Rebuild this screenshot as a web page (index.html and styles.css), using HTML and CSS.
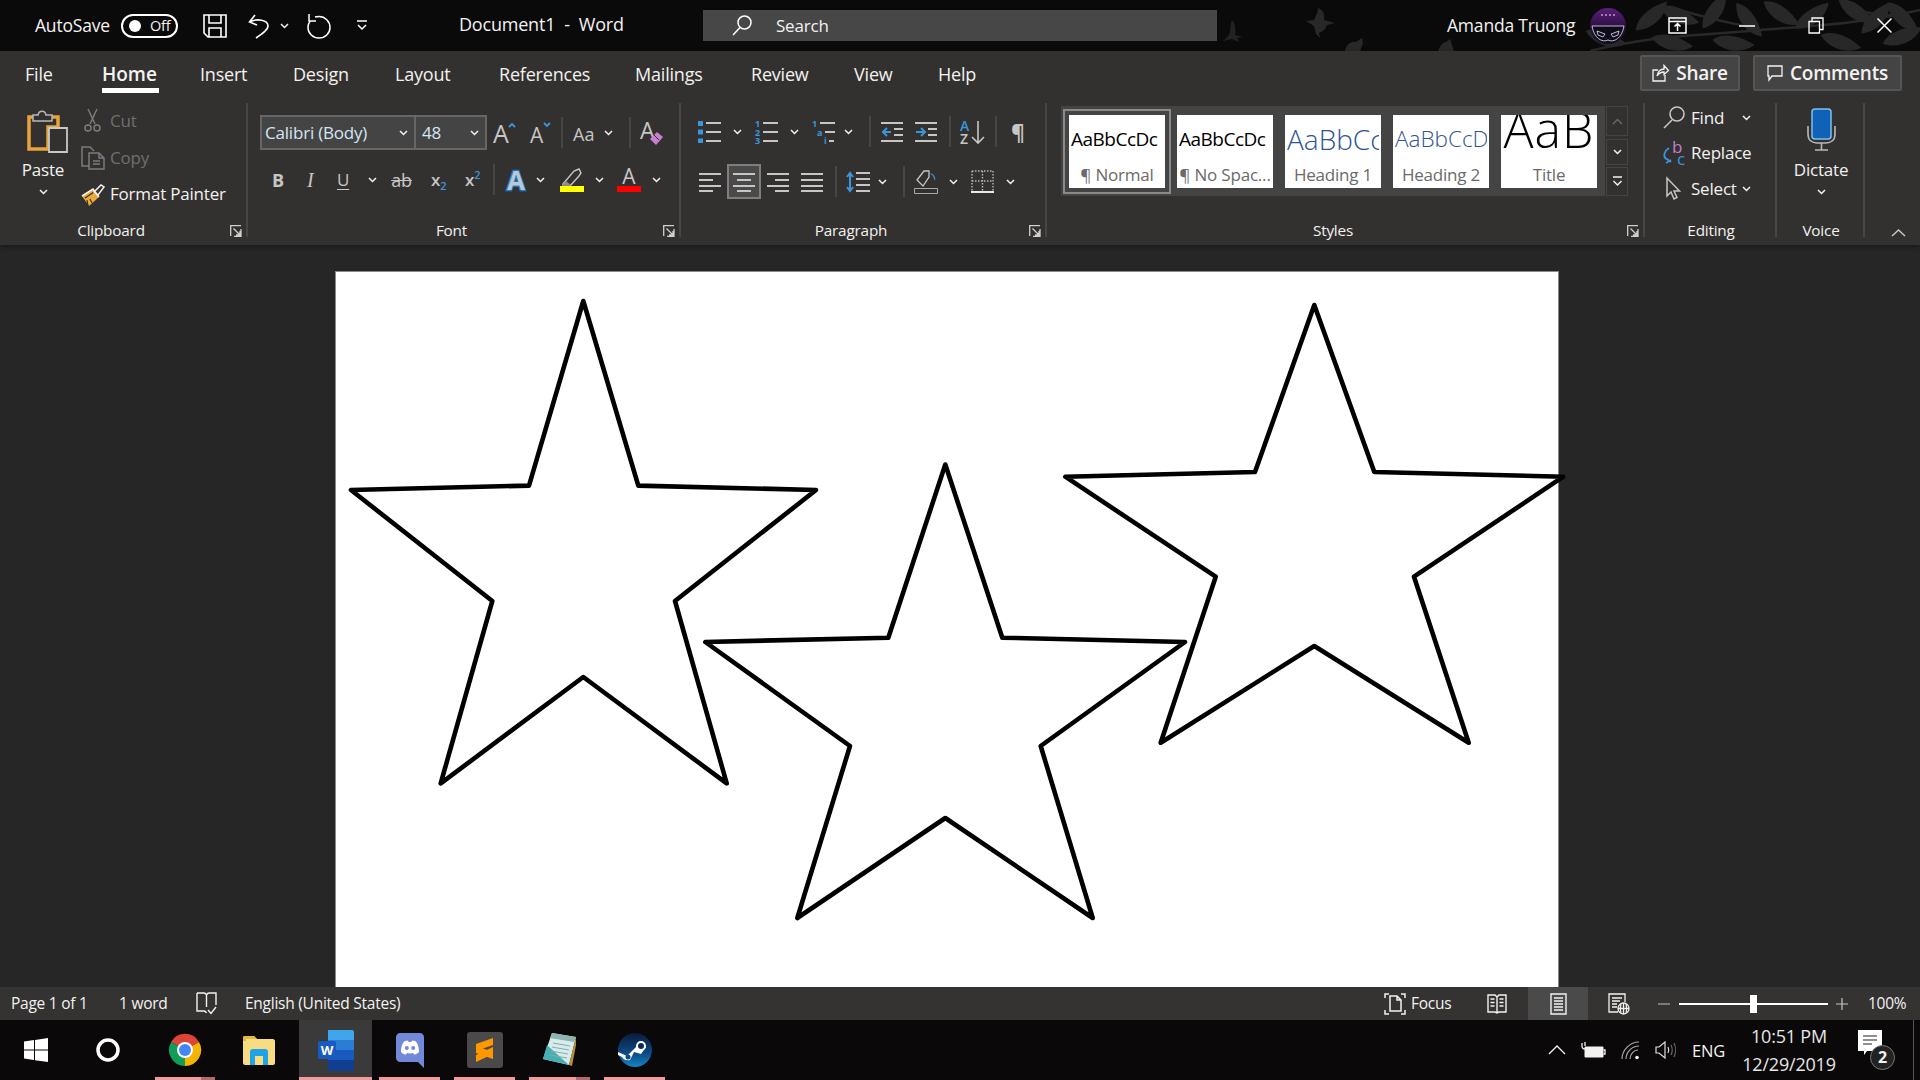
FILE: index.html
```html
<!DOCTYPE html>
<html lang="en">
<head>
<meta charset="utf-8">
<title>Document1 - Word</title>
<link rel="stylesheet" href="styles.css">
</head>
<body>
<svg class="defs" width="0" height="0">
  <symbol id="c" viewBox="0 0 9 6"><path d="M1 1L4.5 4.5L8 1" fill="none" stroke="#f3f2f1" stroke-width="1.5"/></symbol>
  <symbol id="launch" viewBox="0 0 12 12"><path d="M.7 11V.7H11M4 1v0M11 4v7.3H4M3.5 3.5L10 10M10 6v4H6" fill="none" stroke="#d0d0d0" stroke-width="1.3"/></symbol>
  <symbol id="leaf" viewBox="0 0 30 14" overflow="visible"><path d="M0 7C6 0 18-1 30 3C24 11 10 14 0 7Z" fill="#282828"/></symbol>
</svg>

<header class="titlebar">
  <svg class="deco" width="720" height="51" viewBox="1200 0 720 51">
    <path d="M1232 20c3 2 4 10 3 15l8 2-6 1 2 4-7-3-9 2c3-3 6-5 7-9 0-5 1-9 2-12z" fill="#222"/>
    <path d="M1318 8c5 2 7 6 6 12l11 3-8 2c-2 5-5 7-8 8l1 5-4-4-2-8-8-5 8-1c2-4 4-8 4-12zM1345 51c1-6 6-10 11-9l6-4 1 5-3 8zM1438 51c2-5 5-9 8-9l4-3 4 12z" fill="#282828"/>
    <path d="M1590 51C1660 34 1700 36 1760 30C1810 26 1860 24 1920 10M1680 10C1720 22 1740 24 1760 30M1840 0C1850 10 1880 18 1900 14" fill="none" stroke="#282828" stroke-width="2.5"/>
    <use href="#leaf" width="42" height="20" transform="translate(1630 22) rotate(-35)"/>
    <use href="#leaf" width="42" height="20" transform="translate(1590 22) rotate(25)"/>
    <use href="#leaf" width="42" height="20" transform="translate(1655 28) rotate(20)"/>
    <use href="#leaf" width="42" height="20" transform="translate(1665 -2) rotate(30)"/>
    <use href="#leaf" width="42" height="20" transform="translate(1695 22) rotate(-50)"/>
    <use href="#leaf" width="42" height="20" transform="translate(1715 30) rotate(15)"/>
    <use href="#leaf" width="42" height="20" transform="translate(1745 -2) rotate(60)"/>
    <use href="#leaf" width="42" height="20" transform="translate(1770 -6) rotate(40)"/>
    <use href="#leaf" width="42" height="20" transform="translate(1790 20) rotate(-30)"/>
    <use href="#leaf" width="42" height="20" transform="translate(1825 26) rotate(25)"/>
    <use href="#leaf" width="42" height="20" transform="translate(1855 26) rotate(-40)"/>
    <use href="#leaf" width="42" height="20" transform="translate(1880 34) rotate(-15)"/>
    <use href="#leaf" width="42" height="20" transform="translate(1845 -8) rotate(40)"/>
    <use href="#leaf" width="42" height="20" transform="translate(1895 -4) rotate(50)"/>
  </svg>
  <span class="autosave">AutoSave</span>
  <span class="toggle"><i class="toggle-dot"></i><span class="toggle-text">Off</span></span>
  <svg class="m25" width="24" height="24" viewBox="0 0 24 24" fill="none" stroke="#fff" stroke-width="1.6"><path d="M1 1H23V23H5L1 19ZM6 1V9H18V1M6 23V14H18V23"/></svg>
  <svg class="m21" width="22" height="24" viewBox="0 0 22 24" fill="none" stroke="#fff" stroke-width="1.6"><path d="M7 1L1.500 8L9 11M1.500 8C9 4 20 6 20 12C20 16 14 20 8 24"/></svg>
  <svg class="chev m10" width="9" height="6"><use href="#c"/></svg>
  <svg class="m18" width="24" height="26" viewBox="0 0 24 26" fill="none" stroke="#fff" stroke-width="1.5"><path d="M2 1V8H9M8 4C9 3.600 11 3.500 12 3.500C18 3.500 23 8.500 23 14.500C23 20.500 18 25 12 25C6 25 1 20.500 1 14.500C1 12 1.500 10 3 8.500"/></svg>
  <svg class="m25" width="12" height="11" viewBox="0 0 12 11" fill="none" stroke="#fff" stroke-width="1.5"><path d="M1 1H11M2 5L6 9L10 5"/></svg>
  <span class="doc-title">Document1&nbsp; -&nbsp; Word</span>
  <div class="search">
    <svg width="20" height="21" viewBox="0 0 20 21" fill="none" stroke="#fff" stroke-width="1.5"><circle cx="12.500" cy="7.500" r="6.500"/><path d="M8 12.500L1 20"/></svg>
    <span class="search-text">Search</span>
  </div>
  <div class="user">
    <span class="user-name">Amanda Truong</span>
    <svg width="36" height="42" viewBox="0 0 36 42">
      <defs><linearGradient id="av" x1="0" y1="0" x2="0" y2="1"><stop offset="0" stop-color="#5a1e7c"/><stop offset=".55" stop-color="#2a0f3d"/><stop offset="1" stop-color="#120a22"/></linearGradient></defs>
      <circle cx="18" cy="21" r="18" fill="url(#av)"/>
      <path d="M2 21H34C32 33 24 38 18 35C12 38 4 33 2 21ZM7 26L15 29L13 32L8 30ZM29 26L21 29L23 32L28 30Z" fill="#0b0b1a" stroke="#e8e4f0" stroke-width=".8"/>
      <path d="M11 10H25" stroke="#e8e4f0" stroke-dasharray="2 2"/>
    </svg>
    <svg class="m42" width="19" height="17" viewBox="0 0 19 17" fill="none" stroke="#fff" stroke-width="1.500"><path d="M1 1H18V16H1ZM1 4.500H18M9.500 14V7M6.500 9.500L9.500 6.500L12.500 9.500"/></svg>
    <svg class="m52" width="16" height="2" viewBox="0 0 16 2"><path d="M0 1H16" stroke="#fff" stroke-width="1.500"/></svg>
    <svg class="m53" width="16" height="17" viewBox="0 0 16 17" fill="none" stroke="#fff" stroke-width="1.300"><path d="M1 4.500H11.500V16H1ZM4 4.500V1H15V12.500H11.500"/></svg>
    <svg class="m53" width="15" height="15" viewBox="0 0 15 15" fill="none" stroke="#fff" stroke-width="1.500"><path d="M.5 .5L14.500 14.500M14.500 .5L.5 14.500"/></svg>
  </div>
</header>

<section class="ribbon">
  <div class="tabrow">
    <nav class="tabs">
      <span>File</span><span class="tab-active">Home</span><span>Insert</span><span>Design</span><span>Layout</span><span>References</span><span>Mailings</span><span>Review</span><span>View</span><span>Help</span>
    </nav>
    <div class="actions">
      <button class="act act-share"><svg width="17" height="18" viewBox="0 0 17 18" fill="none" stroke="#f3f2f1" stroke-width="1.300"><path d="M6 6H1V17H13V11M5 12C6 7 9 5 12 5V1.500L16.500 6.500L12 10.500V8C9 8 7 9 5 12Z"/></svg><span>Share</span></button>
      <button class="act act-comments"><svg width="16" height="17" viewBox="0 0 16 17" fill="none" stroke="#f3f2f1" stroke-width="1.300"><path d="M1 1H15V11H5L2 15V11H1Z"/></svg><span>Comments</span></button>
    </div>
  </div>
  <div class="groups">
    <div class="group g-clip">
      <div class="clip">
        <div class="paste">
          <svg class="paste-ico" width="41" height="43" viewBox="0 0 41 43">
            <path d="M2 7H31V17H21V39H2Z" fill="none" stroke="#e8a33a" stroke-width="3.500"/>
            <path d="M6 11V5H11C12 0 18 0 19 5H25V11Z" fill="#323130" stroke="#b8b8b8" stroke-width="1.500"/>
            <path d="M22 18H40V42H22Z" fill="#323130" stroke="#c8c8c8" stroke-width="1.800"/>
          </svg>
          <span class="paste-text">Paste</span>
          <svg class="chev m9" width="9" height="6"><use href="#c"/></svg>
        </div>
        <div class="cmds">
          <div class="cmd dim">
            <svg width="24" height="24" viewBox="0 0 24 24" fill="none" stroke="#7b7b7b" stroke-width="1.500"><path d="M7 0L14 15M16 0L9 15"/><circle cx="7" cy="19" r="3"/><circle cx="16" cy="19" r="3"/></svg>
            <span>Cut</span>
          </div>
          <div class="cmd dim">
            <svg width="24" height="24" viewBox="0 0 24 24" fill="none" stroke="#7b7b7b" stroke-width="1.500"><path d="M8 20H1V1H9L13 5M8 7H18L23 12V23H8ZM18 7V12H23M12 15H19M12 18H19"/></svg>
            <span>Copy</span>
          </div>
          <div class="cmd">
            <svg width="24" height="24" viewBox="0 0 24 24"><path d="M1 13L12 6L18 14L8 23Z" fill="#eda936"/><path d="M4 15L13 9M7 23L6 17M11 20L9 16" stroke="#323130" stroke-width="1.200"/><path d="M13 9L20 2L23 4L17 12Z" fill="#323130" stroke="#f3f2f1" stroke-width="1.500"/><path d="M1 13L12 6L18 14" fill="none" stroke="#f3f2f1" stroke-width="1.500"/></svg>
            <span class="cmd-white">Format Painter</span>
          </div>
        </div>
      </div>
      <span class="glabel">Clipboard</span>
      <svg class="launcher" width="12" height="12"><use href="#launch"/></svg>
    </div>

    <div class="group g-font">
      <div class="row r1">
        <div class="box box-font"><span>Calibri (Body)</span><svg class="chev" width="9" height="6"><use href="#c"/></svg></div>
        <div class="box box-size"><span>48</span><svg class="chev" width="9" height="6"><use href="#c"/></svg></div>
        <svg class="m6" width="24" height="24" viewBox="0 0 24 24"><text class="g-a" x="0" y="22" font-size="25">A</text><path d="M16 6L19 3L22 6" fill="none" stroke="#3a96dd" stroke-width="1.800"/></svg>
        <svg class="m13" width="20" height="24" viewBox="0 0 20 24"><text class="g-a" x="0" y="22" font-size="21">A</text><path d="M14 2L17 5L20 2" fill="none" stroke="#3a96dd" stroke-width="1.800"/></svg>
        <i class="sep m11"></i>
        <svg class="m10" width="24" height="20" viewBox="0 0 24 20"><text class="g-a" x="0" y="18" font-size="18">Aa</text></svg>
        <svg class="chev m7" width="9" height="6"><use href="#c"/></svg>
        <i class="sep m16"></i>
        <svg class="m9" width="23" height="26" viewBox="0 0 23 26"><text class="g-a" x="0" y="19" font-size="23">A</text><path d="M10 19L17 12L23 17L16 25Z" fill="#c77fd0"/><path d="M14 15L19 20" stroke="#323130"/></svg>
      </div>
      <div class="row r2">
        <span class="t-b m12">B</span>
        <span class="t-i m24">I</span>
        <span class="t-u m22">U</span>
        <svg class="chev m17" width="9" height="6"><use href="#c"/></svg>
        <span class="t-s m13">ab</span>
        <span class="t-x m18">x<sub>2</sub></span>
        <span class="t-x m18">x<sup>2</sup></span>
        <i class="sep m12"></i>
        <svg class="m10" width="22" height="24" viewBox="0 0 22 24"><text class="g-fx" x="11" y="22" font-size="26" text-anchor="middle">A</text></svg>
        <svg class="chev m9" width="9" height="6"><use href="#c"/></svg>
        <svg class="m15" width="24" height="24" viewBox="0 0 24 24"><path d="M3 16L14 3L19 1L21 5L19 8L9 19H3Z" fill="none" stroke="#c8c6c4" stroke-width="1.400"/><path d="M3 16L6 13L11 17L9 19H3Z" fill="#8a8a8a"/><path d="M0 18H24V24H0Z" fill="#ff0"/></svg>
        <svg class="chev m11" width="9" height="6"><use href="#c"/></svg>
        <svg class="m13" width="24" height="24" viewBox="0 0 24 24"><text class="g-a" x="12" y="16" font-size="21" text-anchor="middle">A</text><path d="M0 18H24V24H0Z" fill="#f00"/></svg>
        <svg class="chev m11" width="9" height="6"><use href="#c"/></svg>
      </div>
      <span class="glabel">Font</span>
      <svg class="launcher" width="12" height="12"><use href="#launch"/></svg>
    </div>

    <div class="group g-para">
      <div class="row r1p">
        <svg width="23" height="22" viewBox="0 0 23 22"><path d="M8 2H23M8 11H23M8 20H23" stroke="#c8c6c4" stroke-width="1.800"/><path d="M0 0H5V5H0ZM0 8.500H5V13.500H0ZM0 17.500H5V22H0Z" fill="#3a96dd"/></svg>
        <svg class="chev m12" width="9" height="6"><use href="#c"/></svg>
        <svg class="m13" width="23" height="24" viewBox="0 0 23 24"><path d="M8 3H23M8 12H23M8 21H23" stroke="#c8c6c4" stroke-width="1.800"/><text class="g-n" x="0" y="7">1</text><text class="g-n" x="0" y="16">2</text><text class="g-n" x="0" y="24">3</text></svg>
        <svg class="chev m12" width="9" height="6"><use href="#c"/></svg>
        <svg class="m13" width="23" height="24" viewBox="0 0 23 24"><path d="M8 3H23M13 12H23M17 21H22" stroke="#c8c6c4" stroke-width="1.800"/><text class="g-n" x="0" y="7">1</text><text class="g-n" x="5" y="16">a</text><text class="g-n" x="12" y="24">i</text></svg>
        <svg class="chev m9" width="9" height="6"><use href="#c"/></svg>
        <i class="sep m16"></i>
        <svg class="m10" width="22" height="22" viewBox="0 0 22 22"><path d="M0 2H22M13 8H22M13 14H22M0 20H22" stroke="#c8c6c4" stroke-width="1.800"/><path d="M10 11H2M6 7L2 11L6 15" fill="none" stroke="#3a96dd" stroke-width="2"/></svg>
        <svg class="m12" width="22" height="22" viewBox="0 0 22 22"><path d="M0 2H22M13 8H22M13 14H22M0 20H22" stroke="#c8c6c4" stroke-width="1.800"/><path d="M1 11H10M6 7L10 11L6 15" fill="none" stroke="#3a96dd" stroke-width="2"/></svg>
        <i class="sep m12"></i>
        <svg class="m9" width="24" height="24" viewBox="0 0 24 24"><text class="g-az" x="0" y="11" fill="#3a96dd">A</text><text class="g-az" x="0" y="24" fill="#c8c6c4">Z</text><path d="M18 1V23M12 17L18 23L24 17" fill="none" stroke="#c8c6c4" stroke-width="1.600"/></svg>
        <i class="sep m11"></i>
        <span class="t-pil m14">¶</span>
      </div>
      <div class="row r2p">
        <svg class="m1" width="22" height="20" viewBox="0 0 22 20"><path d="M0 2H22M0 8H14M0 14H22M0 19H14" stroke="#c8c6c4" stroke-width="1.800"/></svg>
        <div class="active-align m6"><svg width="22" height="20" viewBox="0 0 22 20"><path d="M0 2H22M4 8H18M0 14H22M4 19H18" stroke="#c8c6c4" stroke-width="1.800"/></svg></div>
        <svg class="m6" width="22" height="20" viewBox="0 0 22 20"><path d="M0 2H22M8 8H22M0 14H22M8 19H22" stroke="#c8c6c4" stroke-width="1.800"/></svg>
        <svg class="m12" width="22" height="20" viewBox="0 0 22 20"><path d="M0 2H22M0 8H22M0 14H22M0 19H22" stroke="#c8c6c4" stroke-width="1.800"/></svg>
        <i class="sep m12"></i>
        <svg class="m9" width="24" height="22" viewBox="0 0 24 22"><path d="M10 2H24M10 8H24M10 14H24M10 20H24" stroke="#c8c6c4" stroke-width="1.800"/><path d="M4 3V19M1 6L4 2L7 6M1 16L4 20L7 16" fill="none" stroke="#3a96dd" stroke-width="2"/></svg>
        <svg class="chev m8" width="9" height="6"><use href="#c"/></svg>
        <i class="sep m16"></i>
        <svg class="m9" width="24" height="24" viewBox="0 0 24 24"><path d="M3 10L10 1L15 1V7L9 16Z" fill="none" stroke="#c8c6c4" stroke-width="1.300"/><path d="M16 3C20 4 22 7 21 11L19 6Z" fill="#3a96dd"/><path d="M.5 18.500H23.500V23.500H.5Z" fill="none" stroke="#a8a8a8"/></svg>
        <svg class="chev m11" width="9" height="6"><use href="#c"/></svg>
        <svg class="m13" width="23" height="23" viewBox="0 0 23 23"><path d="M1 1H22M1 1V21M22 1V21M11.500 1V21M1 11H22" fill="none" stroke="#b8b8b8" stroke-width="1.400" stroke-dasharray="1.500 1.500"/><path d="M0 22H23" stroke="#e8e8e8" stroke-width="2"/></svg>
        <svg class="chev m12" width="9" height="6"><use href="#c"/></svg>
      </div>
      <span class="glabel">Paragraph</span>
      <svg class="launcher" width="12" height="12"><use href="#launch"/></svg>
    </div>

    <div class="group g-styles">
      <div class="styles-row">
        <div class="gallery">
          <div class="scell scell-on"><span class="s-sample s-normal">AaBbCcDc</span><span class="s-cap">¶ Normal</span></div>
          <div class="scell"><span class="s-sample s-normal">AaBbCcDc</span><span class="s-cap">¶ No Spac...</span></div>
          <div class="scell"><span class="s-sample s-h1">AaBbCc</span><span class="s-cap">Heading 1</span></div>
          <div class="scell"><span class="s-sample s-h2">AaBbCcD</span><span class="s-cap">Heading 2</span></div>
          <div class="scell"><span class="s-sample s-title">AaB</span><span class="s-cap">Title</span></div>
        </div>
        <div class="gscroll">
          <div class="gbtn gbtn-a"><svg width="11" height="7" viewBox="0 0 11 7"><path d="M1 6L5.500 1.500L10 6" fill="none" stroke="#666" stroke-width="1.500"/></svg></div>
          <div class="gbtn gbtn-b"><svg class="chev" width="9" height="6"><use href="#c"/></svg></div>
          <div class="gbtn gbtn-c"><svg width="11" height="11" viewBox="0 0 11 11" fill="none" stroke="#f3f2f1" stroke-width="1.500"><path d="M1 1H10M1.500 5L5.500 9L9.500 5"/></svg></div>
        </div>
      </div>
      <span class="glabel">Styles</span>
      <svg class="launcher" width="12" height="12"><use href="#launch"/></svg>
    </div>

    <div class="group g-edit">
      <div class="edit-rows">
        <div class="erow">
          <svg width="29" height="24" viewBox="0 0 29 24" fill="none" stroke="#c8c6c4" stroke-width="1.600"><circle cx="14" cy="8" r="7"/><path d="M9 14L1 22"/></svg>
          <span class="etext">Find</span>
          <svg class="chev" width="9" height="6"><use href="#c"/></svg>
        </div>
        <div class="erow">
          <svg width="29" height="24" viewBox="0 0 29 24"><text class="g-r" x="9" y="11" fill="#c77fd0">b</text><text class="g-r" x="14" y="23" fill="#3a96dd">c</text><path d="M6 6C1 9 0 14 3 17M1 15L8 20M3 21L8 18" fill="none" stroke="#3a96dd" stroke-width="1.700"/></svg>
          <span class="etext">Replace</span>
        </div>
        <div class="erow">
          <svg width="29" height="24" viewBox="0 0 29 24"><path d="M4 1V19L8 15L11 22L14 20.500L11 14H16.500Z" fill="none" stroke="#c8c6c4" stroke-width="1.500"/></svg>
          <span class="etext">Select</span>
          <svg class="chev" width="9" height="6"><use href="#c"/></svg>
        </div>
      </div>
      <span class="glabel glabel-center">Editing</span>
    </div>

    <div class="group g-voice">
      <div class="voice">
        <svg width="29" height="43" viewBox="0 0 29 43"><rect x="5" y="1" width="19" height="30" rx="3" fill="#0f62b5" stroke="#7fc0ee" stroke-width="1.500"/><path d="M1 18V26C1 32 5 35 10 35H19C24 35 28 32 28 26V18M14.500 35V42M8 42H21" fill="none" stroke="#b8b8b8" stroke-width="1.600"/></svg>
        <span class="voice-text">Dictate</span>
        <svg class="chev m9" width="9" height="6"><use href="#c"/></svg>
      </div>
      <span class="glabel glabel-center">Voice</span>
    </div>
    <svg class="collapse" width="15" height="8" viewBox="0 0 15 8"><path d="M1 7L7.500 1L14 7" fill="none" stroke="#c8c6c4" stroke-width="1.500"/></svg>
  </div>
</section>

<main class="doc">
  <div class="page">
    <svg class="stars" width="1222" height="715" viewBox="336 272 1222 715">
      <path d="M583.300 301L638.300 485.600L816 490L675 601L726.700 783.400L583.300 677L440.700 783.400L492.300 601L351 490L529 485.600Z"/>
      <path d="M945.300 464.500L1002.300 637.700L1185 642L1040.700 746L1092.700 918L945.300 818L797.300 918L850 746L705.300 642L888.300 637.700Z"/>
      <path d="M1314.300 305L1374.300 472L1563.300 476.700L1414 576.700L1468.700 742.700L1314.300 646L1160.700 742.700L1215.700 576.700L1065.300 476.700L1255 472Z"/>
    </svg>
  </div>
</main>

<footer class="status">
  <span class="st-page">Page 1 of 1</span>
  <span class="st-word">1 word</span>
  <svg width="21" height="23" viewBox="0 0 21 23" fill="none" stroke="#f3f2f1" stroke-width="1.400"><path d="M1 1H8C9 1 10 2 10.500 3C11 2 12 1 13 1H20V13M1 1V19H8C9 19 10 20 10.500 21M10.500 3V15M12 18L15 21.500L20 15"/></svg>
  <span class="st-lang">English (United States)</span>
  <div class="st-right">
    <svg width="22" height="22" viewBox="0 0 22 22" fill="none" stroke="#f3f2f1" stroke-width="1.500"><path d="M1 5V1H5M17 1H21V5M21 17V21H17M5 21H1V17M6 3H13L17 7V18H6ZM13 3V7H17"/></svg>
    <span class="st-focus">Focus</span>
    <svg width="20" height="20" viewBox="0 0 20 20" fill="none" stroke="#f3f2f1" stroke-width="1.400"><path d="M1 1H8L10 3L12 1H19V18H12L10 19L8 18H1ZM10 3V19M3.500 5H7.500M3.500 8.500H7.500M3.500 12H7.500M12.500 5H16.500M12.500 8.500H16.500M12.500 12H16.500"/></svg>
    <div class="st-active"><svg width="17" height="22" viewBox="0 0 17 22" fill="none" stroke="#f3f2f1" stroke-width="1.400"><path d="M1 1H16V21H1ZM4 5H13M4 8H13M4 11H13M4 14H13M4 17H13"/></svg></div>
    <svg class="m20" width="22" height="22" viewBox="0 0 22 22" fill="none" stroke="#f3f2f1" stroke-width="1.300"><path d="M10 19H1V1H17V9M4 5H14M4 8H12M4 11H9M4 14H9"/><circle cx="15.500" cy="15.500" r="5.500"/><path d="M10 15.500H21M15.500 10V21M13 11C12 14 12 17 13 20M18 11C19 14 19 17 18 20"/></svg>
    <svg class="m28" width="12" height="2" viewBox="0 0 12 2"><path d="M0 1H12" stroke="#a8a8a8" stroke-width="1.200"/></svg>
    <div class="slider m9"><i class="slider-thumb"></i></div>
    <svg class="m8" width="12" height="12" viewBox="0 0 12 12"><path d="M0 6H12M6 0V12" stroke="#c8c6c4" stroke-width="1.200"/></svg>
    <span class="st-zoom m20">100%</span>
  </div>
</footer>

<footer class="taskbar">
  <div class="tb-cell tb-first"><svg width="24" height="24" viewBox="0 0 24 24" fill="#fff"><path d="M0 3.400L10 2V11.400H0ZM11 1.900L24 0V11.400H11ZM0 12.500H10V22L0 20.600ZM11 12.500H24V24L11 22.200Z"/></svg></div>
  <div class="tb-cell tb-first"><svg width="24" height="24" viewBox="0 0 24 24"><circle cx="12" cy="12" r="10" fill="none" stroke="#fff" stroke-width="3.500"/></svg></div>
  <div class="tb-cell tb-run tb-split tb-chrome"><svg width="34" height="34" viewBox="0 0 34 34"><path d="M17 17L3.100 9A16 16 0 0 1 31 9Z" fill="#db4437"/><path d="M17 17L31 9A16 16 0 0 1 17 33Z" fill="#f4b400"/><path d="M17 17L17 33A16 16 0 0 1 3.100 9Z" fill="#0f9d58"/><circle cx="17" cy="17" r="8" fill="#fff"/><circle cx="17" cy="17" r="6" fill="#4285f4"/></svg></div>
  <div class="tb-cell tb-explorer"><svg width="32" height="30" viewBox="0 0 32 30"><path d="M0 3C0 1.500 1 1 2 1H11L14 4H30C31 4 32 5 32 6V28C32 29 31 30 30 30H2C1 30 0 29 0 28Z" fill="#f8dc7f"/><path d="M0 3C0 1.500 1 1 2 1H11L14 4H3V6H0Z" fill="#e5b93f"/><path d="M7 30V17C7 15 8 14 10 14H22C24 14 25 15 25 17V30H20V21H12V30Z" fill="#1fa3e8"/></svg></div>
  <div class="tb-cell tb-run tb-word">
    <svg width="36" height="41" viewBox="0 0 36 41"><path d="M10 0H34C35 0 36 1 36 2V10H10Z" fill="#41a5ee"/><path d="M10 10H36V20H10Z" fill="#2b7cd3"/><path d="M10 20H36V30H10Z" fill="#185abd"/><path d="M10 30H36V39C36 40 35 41 34 41H12C11 41 10 40 10 39Z" fill="#103f91"/><rect x="0" y="11" width="18" height="18" rx="1.500" fill="#185abd"/><text class="g-w" x="9" y="25" text-anchor="middle">W</text></svg>
  </div>
  <div class="tb-cell tb-run"><svg width="28" height="36" viewBox="0 0 28 36"><path d="M4 1H24C26 1 28 3 28 5V36L22 30H4C2 30 0 28 0 26V5C0 3 2 1 4 1Z" fill="#7289da"/><path d="M5 20C5 14 7 10 9 9L12 8.500L12.500 10H15.500L16 8.500L19 9C21 10 23 14 23 20C21 22 19.500 22.500 18 22.500L17 21C15 21.500 13 21.500 11 21L10 22.500C8.500 22.500 7 22 5 20Z" fill="#fff"/><circle cx="10.800" cy="16" r="2" fill="#7289da"/><circle cx="17.200" cy="16" r="2" fill="#7289da"/></svg></div>
  <div class="tb-cell tb-run"><svg width="36" height="36" viewBox="0 0 36 36"><rect width="36" height="36" rx="3" fill="#4a4a4a"/><path d="M26 6V13L9 19V12ZM9 14L26 20V27L9 21ZM26 15V22L9 30V23Z" fill="#ff9800"/></svg></div>
  <div class="tb-cell tb-run tb-split"><svg width="33" height="34" viewBox="0 0 33 34"><path d="M9 0L33 4L26 32L0 26Z" fill="#d6ecec"/><path d="M9 0L33 4L31 9L7 5Z" fill="#8db4b0"/><path d="M4 12L26 32L0 26Z" fill="#47b0b3"/><path d="M10 10L27 13M9 14L26 17M8 18L25 21M7 22L24 25" stroke="#8aa" stroke-width="1"/><path d="M33 4L26 32L29 33L33 12Z" fill="#b88f3c"/></svg></div>
  <div class="tb-cell tb-run"><svg width="34" height="34" viewBox="0 0 34 34"><defs><linearGradient id="st" x1="0" y1="0" x2="0" y2="1"><stop offset="0" stop-color="#0c1a3a"/><stop offset=".6" stop-color="#0d4a86"/><stop offset="1" stop-color="#1584c4"/></linearGradient></defs><circle cx="17" cy="17" r="17" fill="url(#st)"/><path d="M0 19L9 23L15 17L22 10L28 14L23 21L16 19L12 27C8 28 5 26 4 24L0 22Z" fill="#fff"/><circle cx="23" cy="13" r="4" fill="#0d2c55" stroke="#fff" stroke-width="2"/><circle cx="10" cy="24" r="2.500" fill="#0d4a86"/></svg></div>
  <div class="tray">
    <svg width="18" height="10" viewBox="0 0 18 10"><path d="M1 9L9 1L17 9" fill="none" stroke="#f3f2f1" stroke-width="1.300"/></svg>
    <svg class="m16" width="23" height="17" viewBox="0 0 23 17"><path d="M3 5H21V15H3Z" fill="#f3f2f1" stroke="#f3f2f1"/><path d="M21.500 8H23V12H21.500M0 1V4C0 6 1 7 3 7M3 0V4" stroke="#f3f2f1" fill="none" stroke-width="1.300"/></svg>
    <svg class="m16" width="19" height="19" viewBox="0 0 19 19" fill="none" stroke="#a8a8a8" stroke-width="1.200"><path d="M1 18C1 9 9 1 18 1M5 18C5 11 11 5 18 5M9 18C9 13 13 9 17 9"/><circle cx="16" cy="16.500" r="1.800" fill="#f3f2f1" stroke="none"/></svg>
    <svg class="m15" width="21" height="18" viewBox="0 0 21 18" fill="none" stroke="#e0e0e0" stroke-width="1.200"><path d="M1 6H4L10 1V17L4 12H1Z"/><path d="M13 6C14 8 14 10 13 12"/><path d="M16 4C17.500 7 17.500 11 16 14M19 2C21 6 21 12 19 16" stroke="#666"/></svg>
    <span class="tray-eng m16">ENG</span>
    <div class="clock"><span>10:51 PM</span><span>12/29/2019</span></div>
    <div class="notif m14">
      <svg width="24" height="26" viewBox="0 0 24 26"><path d="M0 0H24V21H9L6 25V21H0Z" fill="#fff"/><path d="M5 6H19M5 10H19M5 14H14" stroke="#222" stroke-width="1.200"/></svg>
      <span class="badge">2</span>
    </div>
    <i class="desk-line"></i>
  </div>
</footer>
</body>
</html>
```

FILE: styles.css
```css
* { box-sizing: border-box; }
html, body { margin: 0; padding: 0; }
body {
  width: 1920px;
  height: 1080px;
  overflow: hidden;
  display: flex;
  flex-direction: column;
  background: #262626;
  color: #f3f2f1;
  font-family: "Open Sans", "Noto Sans", sans-serif;
  font-size: 17px;
  letter-spacing: -.2px;
}
svg { display: block; flex: none; overflow: visible; }
svg text { font-family: "Open Sans", sans-serif; letter-spacing: 0; }
.defs { position: absolute; }
i { display: block; flex: none; }
span { flex: none; }

.m1 { margin-left: 1px; } .m6 { margin-left: 6px; } .m7 { margin-left: 7px; } .m8 { margin-left: 8px; }
.m9 { margin-left: 9px; } .m10 { margin-left: 10px; } .m11 { margin-left: 11px; } .m12 { margin-left: 12px; }
.m13 { margin-left: 13px; } .m14 { margin-left: 14px; } .m15 { margin-left: 15px; } .m16 { margin-left: 16px; }
.m17 { margin-left: 17px; } .m18 { margin-left: 18px; } .m20 { margin-left: 20px; } .m21 { margin-left: 21px; }
.m22 { margin-left: 22px; } .m24 { margin-left: 24px; } .m25 { margin-left: 25px; } .m28 { margin-left: 28px; }
.m42 { margin-left: 42px; } .m52 { margin-left: 52px; } .m53 { margin-left: 53px; }

/* Title bar */
.titlebar {
  position: relative;
  flex: none;
  height: 51px;
  padding: 0 28px 0 35px;
  display: flex;
  align-items: center;
  background: #0a0a0a;
  overflow: hidden;
}
.titlebar > *:not(.deco) { position: relative; }
.deco { position: absolute; right: 0; top: 0; }
.autosave { width: 86px; font-size: 17.5px; margin-bottom: 2px; }
.toggle {
  width: 57px; height: 24px;
  border: 2px solid #fff; border-radius: 12px;
  display: flex; align-items: center;
  padding-left: 6px;
}
.toggle-dot { width: 12px; height: 12px; border-radius: 50%; background: #fff; }
.toggle-text { margin-left: 9px; font-size: 14.5px; }
.doc-title { margin-left: 91px; width: 244px; font-size: 18px; margin-bottom: 4px; }
.search {
  width: 514px; height: 31px;
  padding-left: 29px;
  display: flex; align-items: center;
  background: #474747;
}
.search-text { margin-left: 24px; }
.user { margin-left: auto; display: flex; align-items: center; }
.user-name { width: 143px; font-size: 17.5px; margin-bottom: 2px; }

/* Ribbon */
.ribbon {
  flex: none;
  height: 194px;
  background: #323130;
  box-shadow: 0 2px 5px rgba(0, 0, 0, .35);
  position: relative;
}
.tabrow { height: 46px; display: flex; padding: 0 18px 0 25px; }
.tabs {
  display: grid;
  grid-template-columns: 77px 98px 93px 102px 104px 136px 116px 103px 84px 60px;
  align-items: center;
  height: 46px;
  font-size: 18px;
}
.tab-active {
  position: relative;
  align-self: stretch;
  width: 57px;
  line-height: 46px;
  font-size: 19px;
  font-weight: 600;
  letter-spacing: 0;
}
.tab-active::after {
  content: ""; position: absolute;
  left: 0; right: 0; top: 37px; height: 5px;
  background: #fff;
}
.actions { margin-left: auto; margin-top: 4px; display: flex; gap: 13px; }
.act {
  height: 36px;
  display: flex; align-items: center; justify-content: center; gap: 7px;
  background: #444;
  border: 2px solid #555;
  border-radius: 2px;
  color: #f3f2f1;
  font-family: inherit;
  font-size: 19px;
  font-weight: 600;
  letter-spacing: -.2px;
}
.act-share { width: 100px; }
.act-comments { width: 149px; }

.groups { height: 148px; padding-top: 6px; display: flex; }
.group { position: relative; height: 142px; flex: none; }
.group::after {
  content: ""; position: absolute;
  right: 0; top: 0; bottom: 8px; width: 2px;
  background: #464646;
}
.glabel {
  position: absolute; left: 0; right: 26px; bottom: 1px;
  height: 28px; line-height: 28px;
  text-align: center;
  font-size: 15.3px;
  color: #f3f2f1;
}
.glabel-center { right: 0; }
.launcher { position: absolute; right: 6px; bottom: 8px; }
.g-clip { width: 248px; }
.g-font { width: 433px; padding-left: 12px; }
.g-para { width: 366px; padding-left: 17px; }
.g-styles { width: 598px; padding-left: 14px; }
.g-edit { width: 132px; padding-left: 18px; }
.g-voice { width: 88px; }
.collapse { align-self: flex-end; margin: 0 0 8px 26px; }

.clip { display: flex; }
.paste { width: 70px; margin-left: 8px; padding-top: 7px; display: flex; flex-direction: column; align-items: center; }
.paste-ico { margin-left: 9px; }
.paste-text { margin-top: 7px; line-height: 20px; }
.paste .chev { margin: 9px 0 0; }
.cmds { margin-left: 3px; display: flex; flex-direction: column; gap: 1px; }
.cmd { height: 36px; display: flex; align-items: center; gap: 5px; }
.cmd span { color: #6f6f6f; margin-bottom: 2px; }
.cmd .cmd-white { color: #f3f2f1; margin-bottom: 4px; }

.row { display: flex; align-items: center; height: 35px; }
.r1 { margin-top: 12px; }
.r2 { margin-top: 12px; }
.r1p { margin-top: 11px; }
.r2p { margin-top: 15px; }
.sep { width: 2px; height: 31px; background: #464646; }
.box {
  height: 35px;
  background: #444;
  border: 2px solid #666;
  display: flex; align-items: center; justify-content: space-between;
  padding: 0 6px 0 3px;
  color: #d6e6f2;
}
.box-font { width: 156px; }
.box-size { width: 73px; margin-left: -2px; padding-left: 6px; }
.g-a { fill: #c8c6c4; }
.g-fx { fill: #b9c7d3; stroke: #1b7ac4; stroke-width: 2.4px; paint-order: stroke; font-weight: 700; }
.g-n { fill: #3a96dd; font-size: 9px; font-weight: 700; }
.g-az { font-size: 14px; font-weight: 600; }
.g-r { font-size: 17px; }
.g-w { fill: #fff; font-size: 13px; font-weight: 700; }
.t-b, .t-i, .t-u, .t-s, .t-x, .t-pil { color: #c8c6c4; line-height: 24px; }
.t-b { width: 11px; font-weight: 700; font-size: 18px; }
.t-i { width: 8px; font-family: "Liberation Serif", serif; font-style: italic; font-size: 20px; }
.t-u { width: 14px; font-size: 17px; text-decoration: underline; text-underline-offset: 3px; }
.t-s { width: 23px; font-size: 18px; text-decoration: line-through; text-align: center; }
.t-x { width: 16px; font-size: 17px; font-weight: 600; position: relative; }
.t-x sub, .t-x sup { color: #3a96dd; font-size: 11px; line-height: 0; }
.t-pil { width: 14px; font-size: 21px; font-weight: 700; }
.active-align {
  width: 34px; height: 35px;
  background: #4a4a4a;
  border: 2px solid #7e7e7e;
  display: flex; align-items: center; justify-content: center;
}

.styles-row { margin-top: 3px; display: flex; }
.gallery {
  width: 544px; height: 90px;
  padding: 9px 8px 0;
  display: flex; gap: 12px;
  background: #444;
}
.scell {
  position: relative;
  width: 96px; height: 73px;
  background: #fff;
  display: flex; flex-direction: column; align-items: center;
}
.scell-on::before {
  content: ""; position: absolute;
  inset: -6px;
  border: 2px solid #8a8a8a;
}
.s-sample {
  position: relative;
  width: 92px; height: 50px;
  overflow: hidden;
  white-space: nowrap;
  color: #000;
  text-align: left;
  line-height: 48px;
  letter-spacing: 0;
}
.s-normal { font-size: 19px; letter-spacing: -.5px; }
.s-h1 { font-size: 28px; color: #2f5496; font-weight: 300; }
.s-h2 { font-size: 22.5px; color: #2f5496; font-weight: 300; }
.s-title { font-size: 50px; font-weight: 300; line-height: 28px; letter-spacing: 1px; text-align: center; }
.s-cap { position: relative; font-size: 17px; line-height: 20px; color: #6b6a69; white-space: nowrap; }
.gscroll { margin-left: 1px; width: 22px; height: 90px; display: flex; flex-direction: column; }
.gbtn {
  width: 22px;
  border: 1px solid #444;
  display: flex; align-items: center; justify-content: center;
}
.gbtn-a { height: 30px; }
.gbtn-b { height: 26px; margin-top: 3px; }
.gbtn-c { height: 29px; margin-top: 2px; }

.edit-rows { display: flex; flex-direction: column; gap: 5.5px; }
.erow { height: 30px; display: flex; align-items: center; }
.etext { width: 50px; margin-left: -1px; margin-right: 1px; margin-bottom: 2px; }

.voice { padding-top: 5px; display: flex; flex-direction: column; align-items: center; }
.voice-text { margin-top: 9px; line-height: 20px; }
.voice .chev { margin: 9px 0 0; }

/* Document */
.doc { flex: 1; min-height: 0; padding: 26px 0 0 335px; background: #262626; }
.page {
  position: relative;
  width: 1224px; height: 100%;
  background: #fff;
  border: 1px solid #8a8a8a;
  border-bottom: 0;
}
.stars { position: absolute; left: 0; top: 0; }
.stars path { fill: none; stroke: #000; stroke-width: 4.6px; stroke-linejoin: round; }

/* Status bar */
.status {
  flex: none;
  height: 33px;
  padding-left: 11px;
  display: flex; align-items: center;
  background: #343332;
  font-size: 15.5px;
  letter-spacing: -.25px;
}
.status span { margin-bottom: 2px; }
.st-page { width: 108px; }
.st-word { width: 77px; }
.st-lang { margin-left: 28px; }
.st-right { margin-left: auto; height: 33px; padding-right: 13px; display: flex; align-items: center; }
.st-focus { margin-left: 5px; width: 76px; }
.st-active {
  margin-left: 21px;
  width: 60px; height: 33px;
  background: #4a4a4a;
  display: flex; align-items: center; justify-content: center;
}
.slider { position: relative; width: 149px; height: 2px; background: #fff; }
.slider-thumb { position: absolute; left: 71px; top: -8px; width: 7px; height: 18px; background: #fff; }
.st-zoom { width: 39px; }

/* Taskbar */
.taskbar {
  flex: none;
  height: 60px;
  display: flex; align-items: center;
  background: #0a0808;
}
.tb-cell { position: relative; flex: none; width: 75px; height: 60px; display: flex; align-items: center; justify-content: center; }
.tb-first { width: 72px; }
.tb-run::after {
  content: ""; position: absolute;
  left: 7px; right: 7px; bottom: 0; height: 3px;
  background: #f4999c;
}
.tb-split::after { background: linear-gradient(90deg, #f4999c 77%, #b5696e 77%); }
.tb-chrome { width: 74px; margin-left: 4px; }
.tb-explorer { width: 74px; }
.tb-word { width: 73px; margin-left: 3px; background: #3a3a3a; }
.tb-word::after { left: 0; right: 0; }
.tray { margin-left: auto; height: 60px; padding-right: 6px; display: flex; align-items: center; font-size: 16.5px; }
.tray-eng { width: 42px; }
.clock { width: 110px; display: flex; flex-direction: column; align-items: center; gap: 6px; line-height: 22px; color: #e6e6e6; font-size: 18px; }
.notif { position: relative; width: 38px; height: 40px; }
.badge {
  position: absolute; left: 12px; top: 15px;
  width: 25px; height: 25px;
  border-radius: 50%;
  background: #222;
  border: 1px solid #777;
  text-align: center;
  line-height: 23px;
  font-size: 16px; font-weight: 700;
}
.desk-line { margin-left: 17px; width: 1px; height: 60px; background: #555; }
```
